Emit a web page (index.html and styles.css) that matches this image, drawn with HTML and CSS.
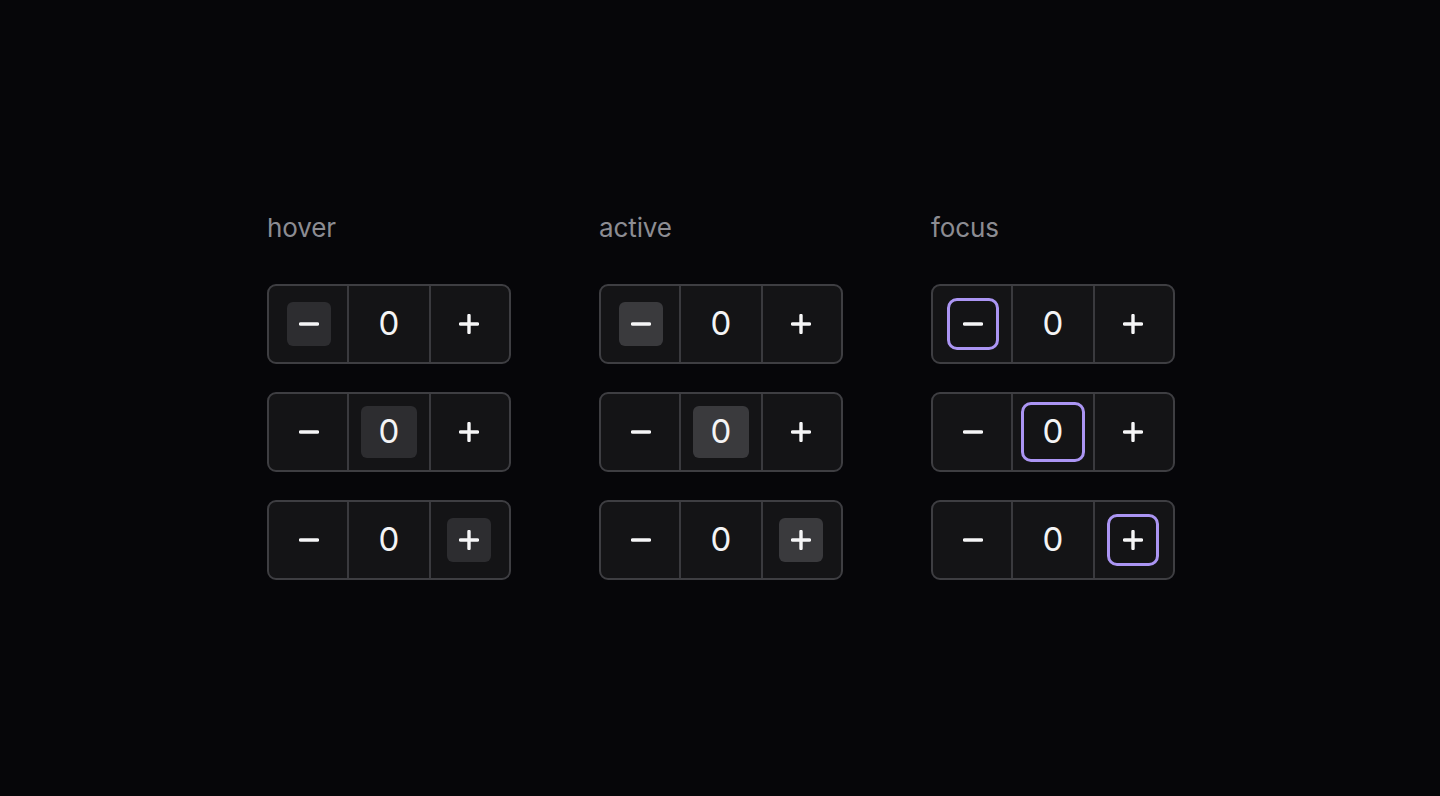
FILE: index.html
```html
<!DOCTYPE html>
<html lang="en">
<head>
<meta charset="utf-8">
<title>Stepper states</title>
<link rel="stylesheet" href="styles.css">
</head>
<body>
<main class="board">
  <section class="group">
    <h2 class="label">hover</h2>
    <div class="stepper">
      <div class="cell dec"><span class="btn is-hover"><svg viewBox="0 0 20 20"><path d="M1.5 10h17"/></svg></span></div>
      <div class="cell mid"><span class="value">0</span></div>
      <div class="cell inc"><span class="btn"><svg viewBox="0 0 20 20"><path d="M1.5 10h17M10 1.5v17"/></svg></span></div>
    </div>
    <div class="stepper">
      <div class="cell dec"><span class="btn"><svg viewBox="0 0 20 20"><path d="M1.5 10h17"/></svg></span></div>
      <div class="cell mid"><span class="value is-hover">0</span></div>
      <div class="cell inc"><span class="btn"><svg viewBox="0 0 20 20"><path d="M1.5 10h17M10 1.5v17"/></svg></span></div>
    </div>
    <div class="stepper">
      <div class="cell dec"><span class="btn"><svg viewBox="0 0 20 20"><path d="M1.5 10h17"/></svg></span></div>
      <div class="cell mid"><span class="value">0</span></div>
      <div class="cell inc"><span class="btn is-hover"><svg viewBox="0 0 20 20"><path d="M1.5 10h17M10 1.5v17"/></svg></span></div>
    </div>
  </section>

  <section class="group">
    <h2 class="label">active</h2>
    <div class="stepper">
      <div class="cell dec"><span class="btn is-active"><svg viewBox="0 0 20 20"><path d="M1.5 10h17"/></svg></span></div>
      <div class="cell mid"><span class="value">0</span></div>
      <div class="cell inc"><span class="btn"><svg viewBox="0 0 20 20"><path d="M1.5 10h17M10 1.5v17"/></svg></span></div>
    </div>
    <div class="stepper">
      <div class="cell dec"><span class="btn"><svg viewBox="0 0 20 20"><path d="M1.5 10h17"/></svg></span></div>
      <div class="cell mid"><span class="value is-active">0</span></div>
      <div class="cell inc"><span class="btn"><svg viewBox="0 0 20 20"><path d="M1.5 10h17M10 1.5v17"/></svg></span></div>
    </div>
    <div class="stepper">
      <div class="cell dec"><span class="btn"><svg viewBox="0 0 20 20"><path d="M1.5 10h17"/></svg></span></div>
      <div class="cell mid"><span class="value">0</span></div>
      <div class="cell inc"><span class="btn is-active"><svg viewBox="0 0 20 20"><path d="M1.5 10h17M10 1.5v17"/></svg></span></div>
    </div>
  </section>

  <section class="group">
    <h2 class="label">focus</h2>
    <div class="stepper">
      <div class="cell dec"><span class="btn is-focus"><svg viewBox="0 0 20 20"><path d="M1.5 10h17"/></svg></span></div>
      <div class="cell mid"><span class="value">0</span></div>
      <div class="cell inc"><span class="btn"><svg viewBox="0 0 20 20"><path d="M1.5 10h17M10 1.5v17"/></svg></span></div>
    </div>
    <div class="stepper">
      <div class="cell dec"><span class="btn"><svg viewBox="0 0 20 20"><path d="M1.5 10h17"/></svg></span></div>
      <div class="cell mid"><span class="value is-focus">0</span></div>
      <div class="cell inc"><span class="btn"><svg viewBox="0 0 20 20"><path d="M1.5 10h17M10 1.5v17"/></svg></span></div>
    </div>
    <div class="stepper">
      <div class="cell dec"><span class="btn"><svg viewBox="0 0 20 20"><path d="M1.5 10h17"/></svg></span></div>
      <div class="cell mid"><span class="value">0</span></div>
      <div class="cell inc"><span class="btn is-focus"><svg viewBox="0 0 20 20"><path d="M1.5 10h17M10 1.5v17"/></svg></span></div>
    </div>
  </section>
</main>
</body>
</html>
```

FILE: styles.css
```css
* { box-sizing: border-box; }

html, body {
  margin: 0;
  padding: 0;
  background: #060609;
}

body {
  min-height: 100vh;
  display: flex;
  align-items: center;
  justify-content: center;
  font-family: Inter, "Noto Sans", sans-serif;
  color: #f4f4f5;
}

.board {
  display: grid;
  grid-template-columns: repeat(3, 244px);
  column-gap: 88px;
  margin-left: 2px;
  margin-top: -5px;
}

.group {
  display: flex;
  flex-direction: column;
  gap: 28px;
}

.label {
  margin: 0 0 12px 0;
  font-size: 26px;
  line-height: 32px;
  font-weight: 400;
  color: #8c8c92;
  letter-spacing: -0.1px;
}

.stepper {
  display: grid;
  grid-template-columns: 78px 84px 78px;
  height: 80px;
  border: 2px solid #3e3e42;
  border-radius: 9px;
  background: #141416;
}

.cell {
  display: flex;
  align-items: center;
  justify-content: center;
}

.cell.dec { padding-left: 2px; }
.cell.inc { padding-right: 2px; }

.cell.mid {
  border-left: 2px solid #3a3a3e;
  border-right: 2px solid #3a3a3e;
}

.btn {
  width: 44px;
  height: 44px;
  border-radius: 6px;
  display: flex;
  align-items: center;
  justify-content: center;
}

.btn svg {
  width: 20px;
  height: 20px;
  fill: none;
  stroke: #f6f6f7;
  stroke-width: 3.4;
  stroke-linecap: round;
}

.value {
  width: 56px;
  height: 52px;
  border-radius: 6px;
  display: flex;
  align-items: center;
  justify-content: center;
  font-size: 33px;
  line-height: 1;
  font-weight: 400;
  color: #f4f4f5;
}

.is-hover { background: #2d2d30; }
.is-active { background: #3a3a3d; }

.is-focus {
  outline: 3px solid #ab95f3;
  outline-offset: 1px;
}
```
